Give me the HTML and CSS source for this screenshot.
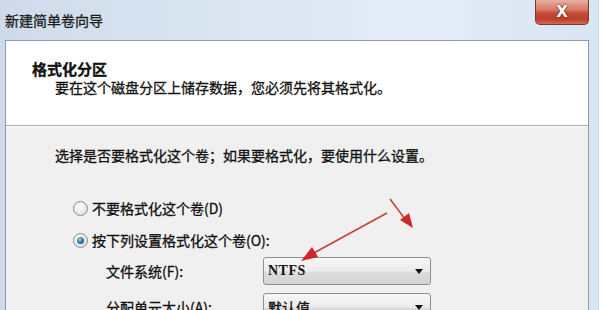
FILE: index.html
```html
<!DOCTYPE html>
<html lang="zh-CN">
<head>
<meta charset="utf-8">
<link rel="stylesheet" href="styles.css">
</head>
<body>
<div class="window">
  <div class="titlebar">
    <div class="title">新建简单卷向导</div>
    <div class="close"><span>X</span></div>
  </div>
  <div class="frame">
    <div class="content">
      <div class="header">
        <div class="h-title">格式化分区</div>
        <div class="h-sub">要在这个磁盘分区上储存数据，您必须先将其格式化。</div>
      </div>
      <div class="body">
        <div class="intro">选择是否要格式化这个卷；如果要格式化，要使用什么设置。</div>
        <div class="radio-row first">
          <span class="radio"></span><span>不要格式化这个卷(D)</span>
        </div>
        <div class="radio-row">
          <span class="radio checked"></span><span>按下列设置格式化这个卷(O):</span>
        </div>
        <div class="field-row">
          <span class="label">文件系统(F):</span>
          <div class="combo"><span class="val latin">NTFS</span><span class="caret"></span></div>
        </div>
        <div class="field-row">
          <span class="label">分配单元大小(A):</span>
          <div class="combo"><span class="val">默认值</span><span class="caret"></span></div>
        </div>
      </div>
    </div>
    <div class="side"></div>
  </div>
  <svg class="arrows" width="602" height="310" viewBox="0 0 602 310">
    <line x1="387" y1="213" x2="312" y2="254" stroke="#c8403c" stroke-width="1.6"/>
    <polygon points="301,261 312,247 318,257" fill="#d0262a"/>
    <line x1="390" y1="199" x2="405" y2="219" stroke="#c8403c" stroke-width="1.6"/>
    <polygon points="413,228 400,220 409,213" fill="#d0262a"/>
  </svg>
</div>
</body>
</html>
```
FILE: styles.css
```css
html, body {
  margin: 0;
  padding: 0;
}
body {
  width: 602px;
  height: 310px;
  overflow: hidden;
  font-family: "Noto Sans CJK SC", "Noto Sans", sans-serif;
  font-size: 14px;
  color: #111;
  background: #fff;
  -webkit-text-stroke: 0.3px #111;
}
.window {
  position: relative;
  width: 598px;
  height: 310px;
  display: flex;
  flex-direction: column;
  background: linear-gradient(90deg, #cfdbea 0%, #dbe6f2 40%, #e4edf7 70%, #d9e5f2 100%);
  border-right: 1px solid #c9d6e4;
}
.titlebar {
  height: 40px;
  display: flex;
  justify-content: space-between;
  align-items: flex-start;
  padding-left: 5px;
  flex: none;
}
.title {
  margin-top: 10px;
  line-height: 20px;
  font-size: 14px;
  color: #2a2a2a;
}
.close {
  width: 52px;
  height: 24px;
  margin-right: 9px;
  border: 1px solid #7a3a30;
  border-top: none;
  border-radius: 0 0 5px 5px;
  background: linear-gradient(180deg, #e8b1a3 0%, #d77a68 40%, #c44a37 55%, #bd3e2c 80%, #d36a55 100%);
  display: flex;
  justify-content: center;
  align-items: center;
}
.close span {
  color: #fff;
  -webkit-text-stroke: 0;
  font-family: "DejaVu Sans", sans-serif;
  font-weight: bold;
  font-size: 15px;
  line-height: 1;
  text-shadow: 0 0 2px #5a1a12, 0 0 1px #5a1a12;
}
.frame {
  flex: 1;
  display: flex;
  padding-left: 5px;
}
.content {
  width: 582px;
  border: 1px solid #8e9bab;
  border-bottom: none;
  display: flex;
  flex-direction: column;
  background: #f0f0f0;
}
.side {
  flex: 1;
}
.header {
  height: 65px;
  padding-top: 19px;
  background: #fff;
  border-bottom: 1px solid #a8a8a8;
  box-shadow: 0 1px 0 #fdfdfd;
}
.h-title {
  padding-left: 26px;
  font-weight: bold;
  font-size: 15px;
  line-height: 18px;
  color: #111;
}
.h-sub {
  padding-left: 49px;
  line-height: 18px;
  font-size: 14px;
}
.body {
  padding: 19px 0 0 49px;
}
.intro {
  line-height: 20px;
}
.radio-row {
  display: flex;
  align-items: center;
  gap: 4px;
  height: 20px;
  margin-left: 18px;
  margin-top: 12px;
}
.radio-row.first {
  margin-top: 33px;
}
.radio {
  width: 13px;
  height: 13px;
  border-radius: 50%;
  border: 1px solid #8a8a8a;
  background: radial-gradient(circle at 40% 35%, #ffffff 0%, #e6e6e6 60%, #cfcfcf 100%);
  display: flex;
  justify-content: center;
  align-items: center;
}
.radio.checked::after {
  content: "";
  width: 7px;
  height: 7px;
  border-radius: 50%;
  background: radial-gradient(circle at 40% 35%, #9ad0ea 0%, #2f6f93 55%, #1c4a66 100%);
}
.field-row {
  display: flex;
  align-items: center;
  height: 28px;
  margin-top: 7px;
}
.field-row + .field-row {
  margin-top: 8px;
}
.label {
  width: 157px;
  padding-left: 51px;
}
.combo {
  border: 1px solid #8f8f8f;
  border-radius: 3px;
  background: linear-gradient(180deg, #f6f6f6 0%, #ececec 50%, #dcdcdc 55%, #d4d4d4 100%);
  display: flex;
  align-items: center;
  justify-content: space-between;
  padding: 0 7px 0 4px;
  box-sizing: border-box;
  width: 168px;
  height: 28px;
}
.val {
  font-size: 14px;
}
.latin {
  font-family: "Liberation Serif", serif;
  font-weight: bold;
  font-size: 14px;
  letter-spacing: 0.5px;
  -webkit-text-stroke: 0;
}
.caret {
  width: 0;
  height: 0;
  border-left: 4px solid transparent;
  border-right: 4px solid transparent;
  border-top: 5px solid #111;
}
.arrows {
  position: absolute;
  left: 0;
  top: 0;
  pointer-events: none;
}
```
